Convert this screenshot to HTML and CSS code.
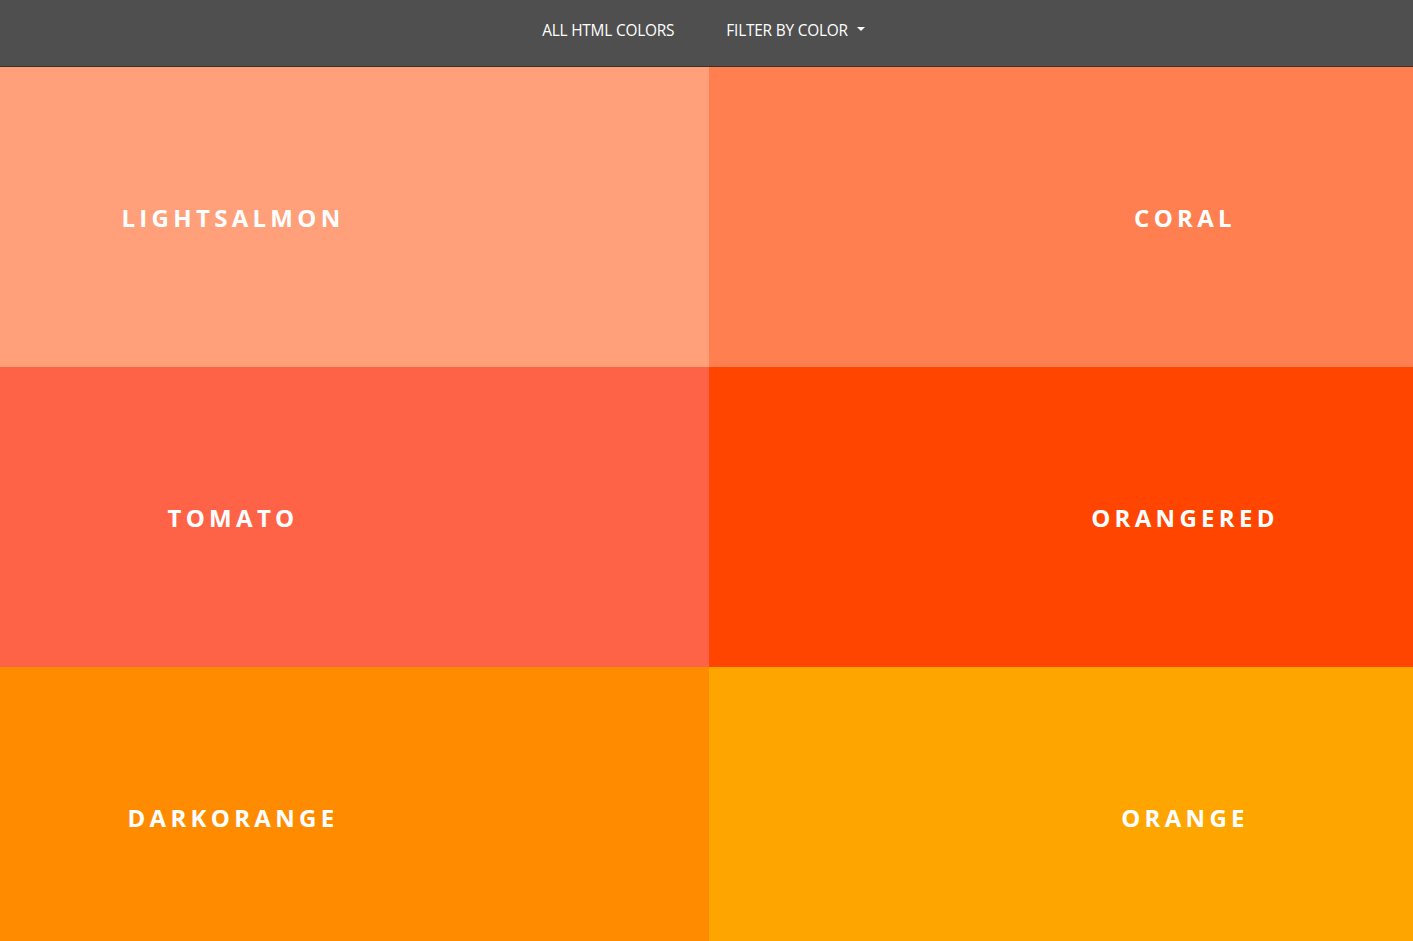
FILE: index.html
```html
<!DOCTYPE html>
<html lang="en">
<head>
<meta charset="utf-8">
<title>HTML Colors</title>
<link rel="stylesheet" href="styles.css">
</head>
<body>
<nav class="navbar">
  <a class="nav-link" href="#">ALL HTML COLORS</a>
  <a class="nav-link dropdown" href="#">FILTER BY COLOR <span class="caret"></span></a>
</nav>
<main class="grid">
  <div class="cell left lightsalmon"><span class="label">LIGHTSALMON</span></div>
  <div class="cell right coral"><span class="label">CORAL</span></div>
  <div class="cell left tomato"><span class="label">TOMATO</span></div>
  <div class="cell right orangered"><span class="label">ORANGERED</span></div>
  <div class="cell left darkorange"><span class="label">DARKORANGE</span></div>
  <div class="cell right orange"><span class="label">ORANGE</span></div>
</main>
</body>
</html>
```
FILE: styles.css
```css
html, body {
  margin: 0;
  padding: 0;
}
body {
  font-family: "Open Sans", "Noto Sans", sans-serif;
  background: #fff;
}
.navbar {
  background: #4f4f4f;
  border-bottom: 2px solid #3d2f2a;
  box-sizing: border-box;
  height: 68px;
  display: flex;
  justify-content: center;
  align-items: center;
  gap: 52px;
  padding-right: 6px;
  padding-bottom: 6px;
}
.nav-link {
  color: #ffffff;
  text-decoration: none;
  font-size: 15.4px;
  letter-spacing: -0.2px;
  display: flex;
  align-items: center;
}
.caret {
  display: inline-block;
  width: 0;
  height: 0;
  margin-left: 9px;
  border-left: 4px solid transparent;
  border-right: 4px solid transparent;
  border-top: 4px solid #fff;
  margin-top: -3px;
}
.grid {
  display: grid;
  grid-template-columns: 709px 1fr;
  grid-auto-rows: 300px;
  margin-top: -1px;
}
.cell {
  display: flex;
  align-items: center;
  justify-content: center;
  box-sizing: border-box;
}
.cell.left {
  padding-right: 247px;
}
.cell.right {
  padding-left: 244px;
}
.label {
  color: #fff;
  font-weight: 700;
  font-size: 24px;
  letter-spacing: 4.3px;
  margin-right: -4px;
}
.lightsalmon { background: #ffa07a; }
.coral { background: #ff7f50; }
.tomato { background: #ff6347; }
.orangered { background: #ff4500; }
.darkorange { background: #ff8c00; }
.orange { background: #ffa500; }
```
